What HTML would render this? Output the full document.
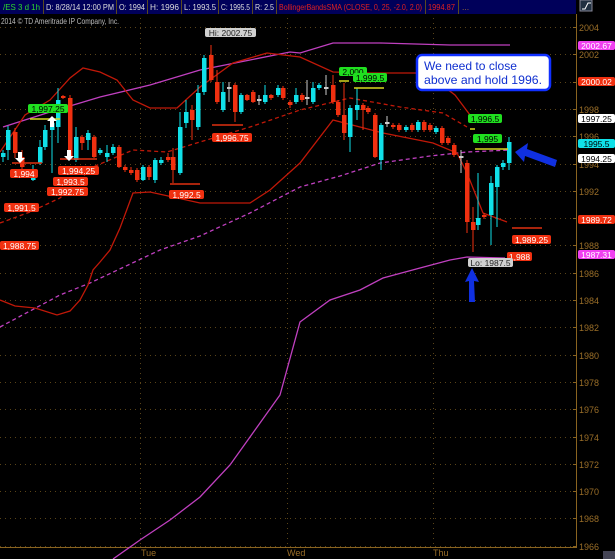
<!DOCTYPE html>
<html><head><meta charset="utf-8"><style>
html,body{margin:0;padding:0;background:#000;width:615px;height:559px;overflow:hidden}
svg{display:block;font-family:"Liberation Sans",sans-serif}
</style></head><body>
<svg id="s" width="615" height="559" viewBox="0 0 615 559" xmlns="http://www.w3.org/2000/svg">
<rect width="615" height="559" fill="#000"/>
<!-- header -->
<rect x="0" y="0" width="576" height="14" fill="#00005a"/>
<g stroke="#5a4a20" stroke-width="1">
<line x1="43.5" y1="0" x2="43.5" y2="14"/><line x1="116.5" y1="0" x2="116.5" y2="14"/><line x1="147.5" y1="0" x2="147.5" y2="14"/>
<line x1="181.5" y1="0" x2="181.5" y2="14"/><line x1="218.5" y1="0" x2="218.5" y2="14"/><line x1="252.5" y1="0" x2="252.5" y2="14"/>
<line x1="276.5" y1="0" x2="276.5" y2="14"/><line x1="425.5" y1="0" x2="425.5" y2="14"/><line x1="458.5" y1="0" x2="458.5" y2="14"/>
</g>
<g font-size="8.5" fill="#ddd" lengthAdjust="spacingAndGlyphs">
<text x="3" y="10" fill="#2dd82d" textLength="37" lengthAdjust="spacingAndGlyphs">/ES 3 d 1h</text>
<text x="46" y="10" textLength="68" lengthAdjust="spacingAndGlyphs">D: 8/28/14 12:00 PM</text>
<text x="119" y="10" textLength="26" lengthAdjust="spacingAndGlyphs">O: 1994</text>
<text x="150" y="10" textLength="29" lengthAdjust="spacingAndGlyphs">H: 1996</text>
<text x="184" y="10" textLength="32" lengthAdjust="spacingAndGlyphs">L: 1993.5</text>
<text x="221" y="10" textLength="29" lengthAdjust="spacingAndGlyphs">C: 1995.5</text>
<text x="255" y="10" textLength="19" lengthAdjust="spacingAndGlyphs">R: 2.5</text>
<text x="279" y="10" fill="#e02020" textLength="143" lengthAdjust="spacingAndGlyphs">BollingerBandsSMA (CLOSE, 0, 25, -2.0, 2.0)</text>
<text x="428" y="10" fill="#e02020" textLength="27" lengthAdjust="spacingAndGlyphs">1994.87</text>
<text x="462" y="10" fill="#a07030">...</text>
</g>
<rect x="580" y="0" width="12" height="11" fill="#203040" stroke="#889" stroke-width="1"/>
<path d="M582 9 L585 9 L588 3 L591 3" stroke="#fff" fill="none"/>
<text x="1" y="24" font-size="8.5" fill="#bbb" textLength="118" lengthAdjust="spacingAndGlyphs">2014 © TD Ameritrade IP Company, Inc.</text>
<!-- axes -->
<line x1="576.5" y1="14" x2="576.5" y2="548" stroke="#8a6420"/>
<line x1="0" y1="547.5" x2="577" y2="547.5" stroke="#8a6420"/>
<g id="grid" stroke="#5a4418" stroke-dasharray="1 4" stroke-width="1"></g>
<g id="axl" font-size="9" fill="#9a6e28"></g>
<text x="141" y="556" font-size="9" fill="#9a6e28">Tue</text>
<text x="287" y="556" font-size="9" fill="#9a6e28">Wed</text>
<text x="433" y="556" font-size="9" fill="#9a6e28">Thu</text>
<rect x="603" y="551" width="12" height="8" fill="#445"/>
<!-- bands -->
<g fill="none" stroke-width="1.3">
<polyline stroke="#c040c0" points="3,127 50,112 100,97 150,85 200,70 250,60 290,52 300,53 333,43 380,43 450,45 510,45"/>
<polyline stroke="#c040c0" points="113,559 140,540 170,520 200,497 230,465 255,430 280,395 300,322 330,300 360,290 383,278 420,268 450,260 467,257 505,258"/>
<polyline stroke="#c040c0" stroke-dasharray="4 3" points="0,327 60,295 90,283 160,250 200,236 250,213 300,187 340,176 380,163 430,156 467,152 510,150"/>
<polyline stroke="#c01808" points="0,152 25,115 50,100 70,78 83,68 100,72 117,80 133,100 150,108 177,108 200,87 233,63 267,53 300,57 333,72 367,73 417,73 435,80 455,95 470,115"/>
<polyline stroke="#c01808" stroke-dasharray="4 3" points="0,223 30,212 60,198 93,167 133,150 167,152 200,142 250,127 300,110 350,98 400,107 443,113 467,127"/>
<polyline stroke="#c01808" points="0,300 15,306 35,308 57,315 70,311 80,300 88,285 93,270 100,262 110,250 120,228 133,193 150,192 200,203 250,203 270,190 300,163 333,120 383,133 433,143 457,153 467,173 483,213 507,222"/>
</g>
<g id="cd"></g>
<!-- support lines -->
<g stroke-width="1.5">
<line x1="30" y1="119" x2="60" y2="119" stroke="#d8d820"/>
<line x1="12" y1="163" x2="42" y2="163" stroke="#e03010"/>
<line x1="60" y1="159" x2="97" y2="159" stroke="#e03010"/>
<line x1="212" y1="125" x2="243" y2="125" stroke="#e03010"/>
<line x1="170" y1="184" x2="200" y2="184" stroke="#e03010"/>
<line x1="339" y1="81" x2="349" y2="81" stroke="#d8d820"/>
<line x1="354" y1="88" x2="384" y2="88" stroke="#d8d820"/>
<line x1="470" y1="129" x2="475" y2="129" stroke="#d8d820"/>
<line x1="475" y1="149" x2="508" y2="149" stroke="#d8d820"/>
<line x1="512" y1="228" x2="542" y2="228" stroke="#e03010"/>
</g>
<!-- arrows on left -->
<g fill="#fff">
<path d="M18 152 h4 v6 h3 l-5 5 l-5 -5 h3z"/>
<path d="M67 150 h4 v6 h3 l-5 5 l-5 -5 h3z"/>
<path d="M50 127 h4 v-6 h3 l-5 -5 l-5 5 h3z"/>
</g>
<g id="lbl" font-size="8.5" text-anchor="middle"></g>
<!-- callout -->
<rect x="417" y="55" width="133" height="35" rx="5" fill="#fff" stroke="#1030ff" stroke-width="2.5"/>
<text x="424" y="70" font-size="12" fill="#1030d0" textLength="93" lengthAdjust="spacingAndGlyphs">We need to close</text>
<text x="424" y="84" font-size="12" fill="#1030d0" textLength="118" lengthAdjust="spacingAndGlyphs">above and hold 1996.</text>
<!-- blue arrows -->
<path d="M515 152 L528 143 L527 149 L557 160 L555 167 L525 156 L524 162 Z" fill="#1030e0"/>
<path d="M472 268 L479 282 L474 281 L475 302 L469 302 L469 281 L465 282 Z" fill="#1030e0"/>
</svg>
<script>
var ns="http://www.w3.org/2000/svg";
function el(p,t,a,txt){var e=document.createElementNS(ns,t);for(var k in a)e.setAttribute(k,a[k]);if(txt!=null)e.textContent=txt;p.appendChild(e);return e;}
var Y=function(p){return 300+(1984-p)*13.65;};
var g=document.getElementById('grid'),ax=document.getElementById('axl');
for(var p=2004;p>=1966;p-=2){var y=Math.round(Y(p))+0.5;el(g,'line',{x1:0,y1:y,x2:574,y2:y});el(ax,'line',{x1:573,y1:y,x2:577,y2:y,stroke:'#8a6420'});el(ax,'text',{x:579,y:y+3.5},String(p));}
[140,287,433].forEach(function(x){el(g,'line',{x1:x+.5,y1:18,x2:x+.5,y2:547});});
var C=[[3,153,157,150,162,'c'],[8,130,150,126,160,'c'],[15,132,153,128,158,'r'],[22,157,167,150,170,'r'],[33,170,180,165,181,'c'],[40,147,163,140,165,'c'],[45,130,147,125,150,'c'],[52,123,130,117,173,'c'],[58,100,127,88,143,'c'],[63,96,98,95,99,'r'],[70,98,157,95,160,'r'],[76,137,160,127,162,'c'],[82,137,143,135,150,'r'],[88,133,140,130,150,'c'],[94,137,157,135,158,'r'],[100,150,153,148,155,'c'],[107,153,157,145,162,'c'],[113,147,153,144,155,'c'],[119,147,167,145,168,'r'],[125,167,170,165,172,'r'],[131,170,173,167,175,'r'],[137,170,180,168,182,'r'],[143,167,180,165,181,'c'],[149,167,177,165,180,'r'],[155,160,180,158,183,'c'],[161,160,163,157,165,'c'],[168,157,160,153,162,'r'],[173,157,170,148,183,'r'],[180,127,173,112,175,'c'],[186,112,123,100,128,'c'],[192,110,120,105,140,'r'],[198,93,127,85,130,'c'],[204,58,92,55,95,'c'],[211,55,80,45,82,'r'],[217,82,102,70,104,'r'],[223,92,110,82,112,'c'],[229,87,89,82,102,'w'],[235,85,112,83,122,'r'],[241,95,112,93,114,'c'],[247,95,100,94,101,'r'],[253,92,102,90,103,'r'],[259,99,101,95,105,'w'],[265,95,102,85,104,'c'],[271,95,98,94,100,'r'],[278,88,95,85,97,'c'],[283,88,98,86,100,'r'],[290,102,105,100,108,'r'],[296,95,102,88,104,'c'],[302,95,100,93,102,'r'],[307,97,99,80,105,'w'],[313,88,102,82,104,'c'],[319,85,88,83,90,'c'],[326,87,89,75,95,'w'],[333,85,102,75,104,'r'],[338,102,115,100,117,'r'],[344,115,133,83,140,'r'],[350,108,137,105,152,'c'],[357,105,110,88,120,'c'],[363,105,110,103,130,'r'],[368,108,112,106,114,'r'],[375,115,157,113,158,'r'],[381,125,160,123,170,'c'],[387,122,124,116,127,'w'],[393,125,127,123,129,'r'],[399,125,130,123,132,'r'],[406,127,130,125,132,'c'],[412,125,130,123,132,'r'],[418,122,130,120,132,'c'],[424,122,130,120,132,'r'],[430,125,130,123,132,'r'],[436,128,132,126,134,'c'],[442,128,143,126,145,'r'],[448,138,143,136,145,'r'],[454,145,155,143,157,'r'],[461,156,158,150,173,'w'],[467,163,222,160,233,'r'],[473,222,230,207,252,'r'],[478,218,225,173,230,'c'],[484,215,217,213,219,'r'],[491,183,215,176,245,'c'],[497,167,187,165,227,'c'],[503,163,167,160,170,'c'],[509,142,163,137,170,'c']];
var cd=document.getElementById('cd'),col={c:'#10e0e8',r:'#f03010',w:'#ccc'};
C.forEach(function(a){var x=a[0],c=col[a[5]];el(cd,'line',{x1:x,y1:a[3],x2:x,y2:a[4],stroke:c,'stroke-width':1});el(cd,'rect',{x:x-2,y:a[1],width:4.5,height:Math.max(1.5,a[2]-a[1]),fill:c});});
var lb=document.getElementById('lbl');
var L=[[28,104,40,'1,997.25','#20e020','#000'],[10,169,28,'1,994','#f03010','#fff'],[58,166,41,'1,994.25','#f03010','#fff'],[53,177,35,'1,993.5','#f03010','#fff'],[47,187,41,'1,992.75','#f03010','#fff'],[4,203,35,'1,991.5','#f03010','#fff'],[0,241,39,'1,988.75','#f03010','#fff'],[205,28,51,'Hi: 2002.75','#d0d0d0','#222'],[212,133,40,'1,996.75','#f03010','#fff'],[169,190,35,'1,992.5','#f03010','#fff'],[339,67,28,'2,000','#20e020','#000'],[353,73,34,'1,999.5','#20e020','#000'],[468,114,34,'1,996.5','#20e020','#000'],[473,134,29,'1,995','#20e020','#000'],[512,235,39,'1,989.25','#f03010','#fff'],[507,252,25,'1,988','#f03010','#fff'],[468,258,45,'Lo: 1987.5','#d0d0d0','#222'],
[578,41,37,'2002.67','#f040f0','#fff'],[578,77,37,'2000.02','#f03010','#fff'],[578,114,37,'1997.25','#fff','#000'],[578,139,37,'1995.5','#10e0e8','#000'],[578,154,37,'1994.25','#fff','#000'],[578,215,37,'1989.72','#f03010','#fff'],[578,250,37,'1987.31','#f040f0','#fff']];
L.forEach(function(a){el(lb,'rect',{x:a[0],y:a[1],width:a[2],height:9,rx:2,fill:a[4]});el(lb,'text',{x:a[0]+a[2]/2,y:a[1]+7.8,fill:a[5]},a[3]);});
</script>
</body></html>
